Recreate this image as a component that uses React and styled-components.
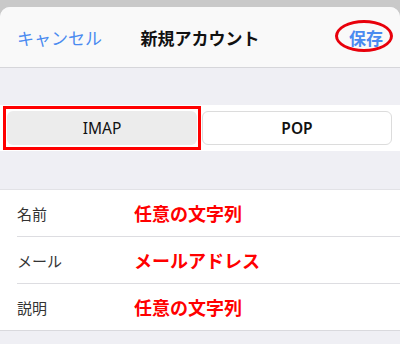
import React from "react";
import styled, { createGlobalStyle } from "styled-components";

const Global = createGlobalStyle`
  html, body { margin: 0; padding: 0; }
  body {
    background: #c9c9c9;
    font-family: "Noto Sans CJK JP", "Noto Sans", sans-serif;
    width: 400px;
    height: 344px;
    overflow: hidden;
  }
`;

const Page = styled.div`
  padding-top: 7px;
  width: 400px;
  height: 344px;
  box-sizing: border-box;
`;

const Sheet = styled.div`
  background: #efeff4;
  border-radius: 10px 10px 0 0;
  overflow: hidden;
  height: 337px;
`;

const NavBar = styled.div`
  position: relative;
  height: 60px;
  background: #f9f9f9;
  border-bottom: 1px solid #d6d6da;
  display: grid;
  grid-template-columns: 1fr auto 1fr;
  align-items: center;
  padding: 0 17px;
`;

const NavButton = styled.span`
  color: #4a8af0;
  font-size: 17px;
  font-weight: ${(p) => (p.$bold ? 700 : 400)};
  justify-self: ${(p) => p.$align};
  position: relative;
  line-height: 1;
`;

const Title = styled.span`
  font-size: 17px;
  font-weight: 700;
  color: #111;
  line-height: 1;
`;

const Ellipse = styled.span`
  position: absolute;
  left: -14px;
  top: -9px;
  width: 52px;
  height: 26px;
  border: 3px solid #e8000b;
  border-radius: 50%;
`;

const Spacer = styled.div`
  height: ${(p) => p.$h}px;
`;

const Band = styled.div`
  background: #ffffff;
  height: 46px;
  display: grid;
  grid-template-columns: 198px 190px;
  column-gap: 1px;
  align-items: center;
  padding: 0 8px 0 3px;
`;

const Highlight = styled.div`
  border: 3px solid #f00;
  padding: 2px 1px;
`;

const Segment = styled.div`
  height: 34px;
  box-sizing: border-box;
  border-radius: 6px;
  display: flex;
  align-items: center;
  justify-content: center;
  font-family: "Noto Sans", "Liberation Sans", sans-serif;
  font-size: 15.5px;
  color: #111;
  background: ${(p) => (p.$active ? "#ececec" : "#ffffff")};
  border: ${(p) => (p.$active ? "none" : "1.5px solid #dcdcdc")};
  font-weight: ${(p) => (p.$active ? 400 : 600)};
`;

const List = styled.div`
  background: #ffffff;
  border-top: 1px solid #e2e2e6;
  border-bottom: 1px solid #d9d9dd;
`;

const Row = styled.div`
  margin-left: 17px;
  height: 46px;
  display: grid;
  grid-template-columns: 117px 1fr;
  align-items: center;
  border-bottom: ${(p) => (p.$last ? "none" : "1px solid #dddde1")};
`;

const Label = styled.span`
  font-size: 15px;
  color: #333;
`;

const Value = styled.span`
  font-size: 18px;
  font-weight: 700;
  color: #f00;
`;

const rows = [
  ["名前", "任意の文字列"],
  ["メール", "メールアドレス"],
  ["説明", "任意の文字列"],
];

export default function App() {
  return (
    <>
      <Global />
      <Page>
        <Sheet>
          <NavBar>
            <NavButton $align="start">キャンセル</NavButton>
            <Title>新規アカウント</Title>
            <NavButton $align="end" $bold>
              保存
              <Ellipse />
            </NavButton>
          </NavBar>
          <Spacer $h={37} />
          <Band>
            <Highlight>
              <Segment $active>IMAP</Segment>
            </Highlight>
            <Segment>POP</Segment>
          </Band>
          <Spacer $h={38} />
          <List>
            {rows.map(([l, v], i) => (
              <Row key={i} $last={i === rows.length - 1}>
                <Label>{l}</Label>
                <Value>{v}</Value>
              </Row>
            ))}
          </List>
        </Sheet>
      </Page>
    </>
  );
}
